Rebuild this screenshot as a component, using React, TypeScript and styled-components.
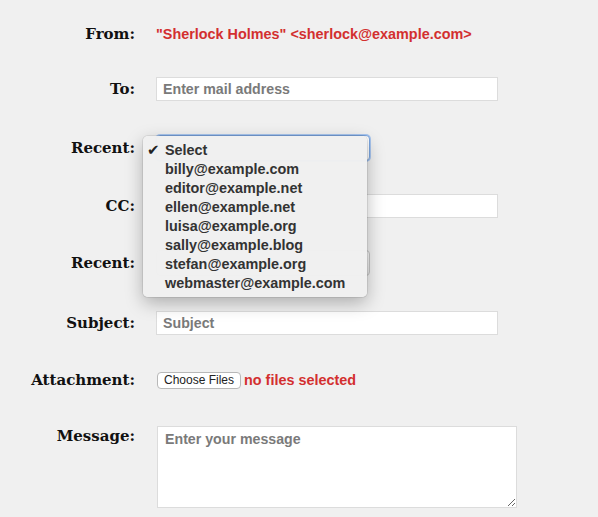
import React from "react";
import styled, { createGlobalStyle } from "styled-components";

const Global = createGlobalStyle`
  html, body { margin: 0; padding: 0; background: #f0f0f0; }
  body { width: 598px; height: 517px; overflow: hidden; }
`;

const Form = styled.form`
  display: flex;
  flex-direction: column;
  padding-top: 6px;
  font-family: "Liberation Sans", Arial, sans-serif;
`;

const Row = styled.div<{ $h: number; $top?: boolean }>`
  display: flex;
  align-items: ${(p) => (p.$top ? "flex-start" : "center")};
  height: ${(p) => p.$h}px;
  padding-top: ${(p) => (p.$top ? "18px" : "0")};
  box-sizing: border-box;
`;

const Label = styled.label<{ $top?: boolean }>`
  width: 135px;
  flex: none;
  text-align: right;
  padding-right: 21px;
  box-sizing: content-box;
  font-family: "DejaVu Serif", Georgia, serif;
  font-weight: bold;
  font-size: 15px;
  color: #111;
  margin-top: ${(p) => (p.$top ? "1px" : "0")};
`;

const RedText = styled.span`
  color: #d32f2f;
  font-weight: bold;
  font-size: 14.4px;
  white-space: nowrap;
`;

const TextInput = styled.input`
  width: 342px;
  height: 24px;
  box-sizing: border-box;
  border: 1px solid #dcdcdc;
  background: #fff;
  padding: 0 6px;
  font-family: "Liberation Sans", Arial, sans-serif;
  font-weight: bold;
  font-size: 14.2px;
  color: #333;
  outline: none;
  &::placeholder { color: #7a7a7a; }
`;

const SelectWrap = styled.div`
  position: relative;
  width: 214px;
  height: 26px;
`;

const SelectBox = styled.div<{ $focused?: boolean }>`
  width: 100%;
  height: 100%;
  box-sizing: border-box;
  border-radius: 4px;
  border: 1px solid ${(p) => (p.$focused ? "#7ba6e0" : "#c4c4c4")};
  background: ${(p) =>
    p.$focused ? "#fff" : "linear-gradient(#f8f8f8, #e4e4e4)"};
  box-shadow: ${(p) => (p.$focused ? "0 0 0 1px #a9c6ef" : "none")};
`;

const Menu = styled.ul`
  position: absolute;
  left: -13px;
  top: 1px;
  width: 224px;
  margin: 0;
  padding: 5px 0 4px;
  list-style: none;
  background: rgba(240, 240, 240, 0.98);
  border-radius: 5px;
  box-shadow: 0 0 0 1px rgba(0, 0, 0, 0.08), 0 6px 18px rgba(0, 0, 0, 0.28);
  z-index: 10;
`;

const MenuItem = styled.li`
  position: relative;
  height: 19px;
  line-height: 19px;
  padding-left: 22px;
  font-weight: bold;
  font-size: 14.4px;
  color: #333;
  white-space: nowrap;
`;

const Check = styled.span`
  position: absolute;
  left: 4px;
  top: 0;
  font-family: "DejaVu Sans", sans-serif;
  font-size: 15px;
  color: #222;
`;

const FileButton = styled.button`
  height: 17px;
  padding: 0 6px;
  margin-left: 1px;
  margin-right: 3px;
  border: 1px solid #b8b8b8;
  border-radius: 4px;
  background: #fff;
  font-family: "Liberation Sans", Arial, sans-serif;
  font-size: 12px;
  color: #222;
  line-height: 15px;
`;

const FileRow = styled.div`
  display: flex;
  align-items: center;
`;

const TextArea = styled.textarea`
  width: 360px;
  height: 82px;
  box-sizing: border-box;
  margin-left: 1px;
  border: 1px solid #dcdcdc;
  background: #fff;
  padding: 4px 7px;
  font-family: "Liberation Sans", Arial, sans-serif;
  font-weight: bold;
  font-size: 14.2px;
  color: #333;
  outline: none;
  &::placeholder { color: #7a7a7a; }
`;

const recents = [
  "billy@example.com",
  "editor@example.net",
  "ellen@example.net",
  "luisa@example.org",
  "sally@example.blog",
  "stefan@example.org",
  "webmaster@example.com",
];

export default function App() {
  return (
    <>
      <Global />
      <Form onSubmit={(e) => e.preventDefault()}>
        <Row $h={56}>
          <Label>From:</Label>
          <RedText>"Sherlock Holmes" &lt;sherlock@example.com&gt;</RedText>
        </Row>
        <Row $h={54}>
          <Label>To:</Label>
          <TextInput placeholder="Enter mail address" />
        </Row>
        <Row $h={64}>
          <Label>Recent:</Label>
          <SelectWrap>
            <SelectBox $focused />
            <Menu>
              <MenuItem>
                <Check>✔</Check>Select
              </MenuItem>
              {recents.map((r) => (
                <MenuItem key={r}>{r}</MenuItem>
              ))}
            </Menu>
          </SelectWrap>
        </Row>
        <Row $h={52}>
          <Label>CC:</Label>
          <TextInput />
        </Row>
        <Row $h={62}>
          <Label>Recent:</Label>
          <SelectWrap>
            <SelectBox />
          </SelectWrap>
        </Row>
        <Row $h={58}>
          <Label>Subject:</Label>
          <TextInput placeholder="Subject" />
        </Row>
        <Row $h={56}>
          <Label>Attachment:</Label>
          <FileRow>
            <FileButton type="button">Choose Files</FileButton>
            <RedText>no files selected</RedText>
          </FileRow>
        </Row>
        <Row $h={120} $top>
          <Label $top>Message:</Label>
          <TextArea placeholder="Enter your message" />
        </Row>
      </Form>
    </>
  );
}
